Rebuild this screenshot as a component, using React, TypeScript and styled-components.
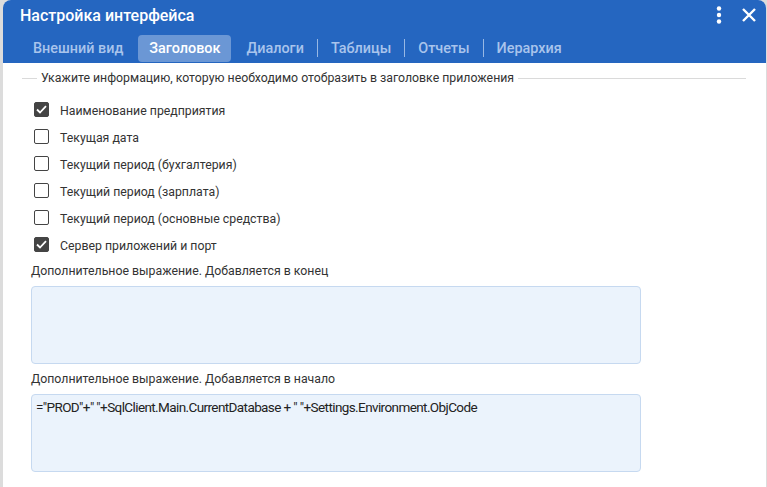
import React from "react";
import styled, { createGlobalStyle } from "styled-components";

const Global = createGlobalStyle`
  html, body { margin: 0; padding: 0; background: #dcdcdc; }
  body { font-family: Roboto, "Liberation Sans", Arial, sans-serif; }
  * { box-sizing: border-box; }
`;

const Page = styled.div`
  width: 767px;
  height: 487px;
  padding: 0 1px 0 3px;
  background: #dcdcdc;
  overflow: hidden;
`;

const Dialog = styled.div`
  height: 487px;
  background: #fff;
  border-radius: 8px 8px 0 0;
  overflow: hidden;
  display: flex;
  flex-direction: column;
`;

const Header = styled.div`
  background: #2566c0;
  height: 63px;
  display: flex;
  flex-direction: column;
  padding: 0 0 0 17px;
`;

const TitleRow = styled.div`
  height: 30px;
  display: flex;
  align-items: center;
  color: #fff;
`;

const Title = styled.div`
  flex: 1;
  font-size: 16px;
  font-weight: 500;
`;

const IconBtn = styled.div<{ $mr?: number }>`
  width: 30px;
  height: 30px;
  display: flex;
  align-items: center;
  justify-content: center;
  margin-right: ${(p) => p.$mr ?? 0}px;
`;

const Tabs = styled.div`
  display: flex;
  align-items: center;
  height: 28px;
  margin-top: 4px;
`;

const Tab = styled.div<{ $active?: boolean }>`
  font-size: 14.4px;
  font-weight: 500;
  height: 27px;
  display: flex;
  align-items: center;
  padding: 0 ${(p) => (p.$active ? "11px" : "13px")};
  margin: 0 ${(p) => (p.$active ? "2px" : "0")};
  border-radius: 4px;
  color: ${(p) => (p.$active ? "#fff" : "#a9c4ec")};
  background: ${(p) => (p.$active ? "#6b97d5" : "transparent")};
`;

const Sep = styled.div`
  width: 1px;
  height: 18px;
  background: #98b8e4;
`;

const Body = styled.div`
  padding: 7px 20px 0 19px;
  color: #333;
  font-size: 12.3px;
`;

const Legend = styled.div`
  display: flex;
  align-items: center;
  gap: 4px;
  height: 16px;
  &::before {
    content: "";
    width: 15px;
    height: 1px;
    background: #dadada;
  }
  &::after {
    content: "";
    flex: 1;
    height: 1px;
    background: #dadada;
  }
`;

const List = styled.div`
  display: flex;
  flex-direction: column;
  padding: 11px 0 0 12px;
`;

const CheckRow = styled.label`
  display: flex;
  align-items: center;
  height: 27px;
  gap: 11px;
`;

const Box = styled.span<{ $checked?: boolean }>`
  width: 15px;
  height: 15px;
  border-radius: 2px;
  border: 1.5px solid #444;
  background: ${(p) => (p.$checked ? "#444" : "#fff")};
  display: flex;
  align-items: center;
  justify-content: center;
  margin-top: -3px;
`;

const FieldLabel = styled.div`
  padding: 5px 0 0 9px;
  height: 24px;
`;

const Area = styled.div`
  margin: 3px 0 0 9px;
  width: 610px;
  height: 78px;
  background: #ebf3fc;
  border: 1px solid #c6d9f0;
  border-radius: 4px;
  padding: 4px 4px;
  font-size: 13.5px;
  letter-spacing: -0.6px;
  color: #222;
  & + div { margin-top: 3px; }
`;

const Check = () => (
  <svg width="11" height="9" viewBox="0 0 11 9">
    <path d="M1 4.5 L4 7.5 L10 1.2" stroke="#fff" strokeWidth="1.8" fill="none" />
  </svg>
);

const items: [string, boolean][] = [
  ["Наименование предприятия", true],
  ["Текущая дата", false],
  ["Текущий период (бухгалтерия)", false],
  ["Текущий период (зарплата)", false],
  ["Текущий период (основные средства)", false],
  ["Сервер приложений и порт", true],
];

export default function App() {
  return (
    <Page>
      <Global />
      <Dialog>
        <Header>
          <TitleRow>
            <Title>Настройка интерфейса</Title>
            <IconBtn>
              <svg width="6" height="18" viewBox="0 0 6 18">
                <circle cx="3" cy="2.5" r="2.2" fill="#fff" />
                <circle cx="3" cy="9" r="2.2" fill="#fff" />
                <circle cx="3" cy="15.5" r="2.2" fill="#fff" />
              </svg>
            </IconBtn>
            <IconBtn $mr={2}>
              <svg width="16" height="16" viewBox="0 0 16 16">
                <path d="M2 2 L14 14 M14 2 L2 14" stroke="#fff" strokeWidth="2.4" />
              </svg>
            </IconBtn>
          </TitleRow>
          <Tabs>
            <Tab>Внешний вид</Tab>
            <Tab $active>Заголовок</Tab>
            <Tab>Диалоги</Tab>
            <Sep />
            <Tab>Таблицы</Tab>
            <Sep />
            <Tab>Отчеты</Tab>
            <Sep />
            <Tab>Иерархия</Tab>
          </Tabs>
        </Header>
        <Body>
          <Legend>Укажите информацию, которую необходимо отобразить в заголовке приложения</Legend>
          <List>
            {items.map(([t, c]) => (
              <CheckRow key={t}>
                <Box $checked={c}>{c && <Check />}</Box>
                {t}
              </CheckRow>
            ))}
          </List>
          <FieldLabel>Дополнительное выражение. Добавляется в конец</FieldLabel>
          <Area />
          <FieldLabel>Дополнительное выражение. Добавляется в начало</FieldLabel>
          <Area>="PROD"+" "+SqlClient.Main.CurrentDatabase + " "+Settings.Environment.ObjCode</Area>
        </Body>
      </Dialog>
    </Page>
  );
}
